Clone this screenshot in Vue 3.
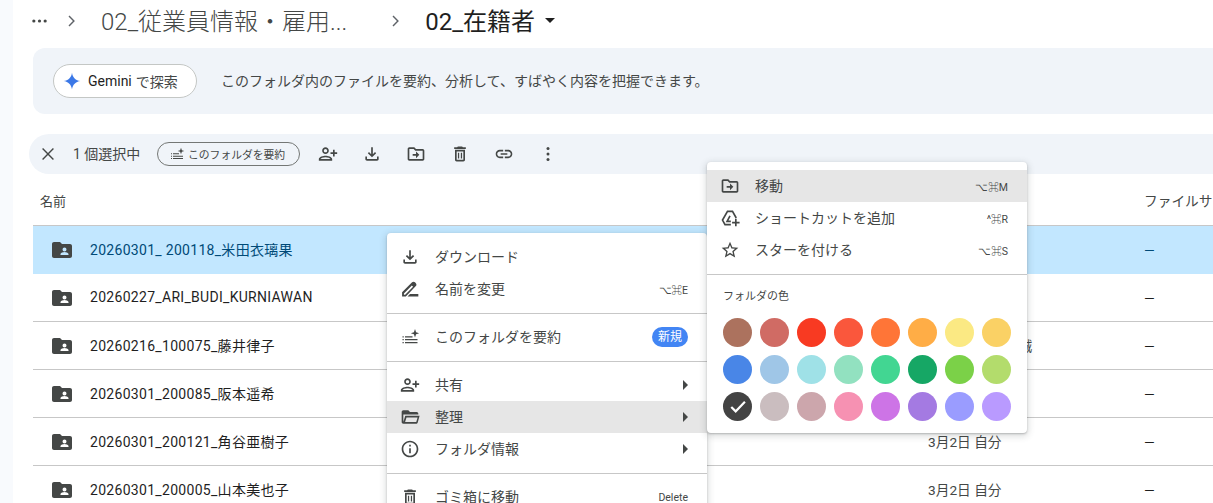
<script setup>
const rows = [
  { name: '20260301_ 200118_米田衣璃果', date: '', selected: true },
  { name: '20260227_ARI_BUDI_KURNIAWAN', date: '' },
  { name: '20260216_100075_藤井律子', date: '3月2日 人事部 誠' },
  { name: '20260301_200085_阪本遥希', date: '' },
  { name: '20260301_200121_角谷亜樹子', date: '3月2日 自分' },
  { name: '20260301_200005_山本美也子', date: '3月2日 自分' }
]

const swatches = [
  '#ac725e', '#d06b64', '#f83a22', '#fa573c', '#ff7537', '#ffad46', '#fbe983', '#fad165',
  '#4986e7', '#9fc6e7', '#9fe1e7', '#92e1c0', '#42d692', '#16a765', '#7bd148', '#b3dc6c',
  '#434343', '#cabdbf', '#cca6ac', '#f691b2', '#cd74e6', '#a47ae2', '#9a9cff', '#b99aff'
]

const icons = {
  person: 'M15 12c2.21 0 4-1.79 4-4s-1.79-4-4-4-4 1.79-4 4 1.79 4 4 4zm0-6c1.1 0 2 .9 2 2s-.9 2-2 2-2-.9-2-2 .9-2 2-2zm0 8c-2.67 0-8 1.34-8 4v2h16v-2c0-2.66-5.33-4-8-4zm-6 4c.22-.72 3.31-2 6-2 2.7 0 5.8 1.29 6 2H9zm-3-3v-3h3v-2H6V7H4v3H1v2h3v3h2z',
  download: 'M12 16l-5-5 1.4-1.45 2.6 2.6V4h2v8.15l2.6-2.6L17 11l-5 5zM6 20c-.55 0-1.02-.2-1.41-.59S4 18.55 4 18v-3h2v3h12v-3h2v3c0 .55-.2 1.02-.59 1.41S18.55 20 18 20H6z',
  move: 'M20 6h-8l-2-2H4c-1.1 0-2 .9-2 2v12c0 1.1.9 2 2 2h16c1.1 0 2-.9 2-2V8c0-1.1-.9-2-2-2zm0 12H4V6h5.17l2 2H20v10zm-8-4H8v-2h4V9l4 4-4 4v-3z',
  trash: 'M6 19c0 1.1.9 2 2 2h8c1.1 0 2-.9 2-2V7H6v12zM8 9h8v10H8V9zm7.5-5l-1-1h-5l-1 1H5v2h14V4h-3.5zM9.5 10.5H11v7H9.5zM13 10.5h1.5v7H13z',
  link: 'M3.9 12c0-1.71 1.39-3.1 3.1-3.1h4V7H7c-2.76 0-5 2.24-5 5s2.24 5 5 5h4v-1.9H7c-1.71 0-3.1-1.39-3.1-3.1zM8 13h8v-2H8v2zm9-6h-4v1.9h4c1.71 0 3.1 1.39 3.1 3.1s-1.39 3.1-3.1 3.1h-4V17h4c2.76 0 5-2.24 5-5s-2.24-5-5-5z',
  summary: 'M3 11h1.500v1.500H3zM3 14.500h1.500V16H3zM3 18h1.500v1.500H3zM6 11h9v1.500H6zM6 14.500h15V16H6zM6 18h15v1.500H6zM18 2.500l1.300 3.700 3.700 1.300-3.700 1.300L18 12.500l-1.300-3.700-3.700-1.300 3.700-1.300z',
  rename: 'M2.500 21v-5L14.500 4c1-1 2.500-1 3.500 0l1 1c1 1 1 2.500 0 3.500L7 21H2.500zm2.200-2.200h1.500L15.700 9.300l-1.500-1.500-9.500 9.500v1.500zM12 18h10v3H9z',
  folderOpen: 'M4 20c-1.100 0-2-.9-2-2V6c0-1.100.9-2 2-2h6l2 2h8c1.100 0 2 .9 2 2v1H4v9l2.300-7.500H23.500L21.300 18.500c-.3.9-1.100 1.500-2 1.500H4zm3.800-7.500l-1.700 5.500h13.400l1.600-5.500H7.800z',
  info: 'M11 7h2v2h-2zm0 4h2v6h-2zm1-9C6.480 2 2 6.480 2 12s4.480 10 10 10 10-4.480 10-10S17.520 2 12 2zm0 18c-4.410 0-8-3.590-8-8s3.590-8 8-8 8 3.590 8 8-3.590 8-8 8z',
  star: 'M22 9.240l-7.190-.62L12 2 9.190 8.630 2 9.240l5.460 4.730L5.820 21 12 17.270 18.180 21l-1.630-7.030L22 9.240zM12 15.400l-3.760 2.270 1-4.280-3.320-2.880 4.380-.38L12 6.100l1.710 4.040 4.380.38-3.320 2.880 1 4.280L12 15.400z',
  shortcutPlus: 'M18 13h2v3.500h3.500v2H20V22h-2v-3.500h-3.500v-2H18z',
  folderShared: 'M20 6h-8l-2-2H4c-1.100 0-2 .9-2 2v12c0 1.100.9 2 2 2h16c1.100 0 2-.9 2-2V8c0-1.100-.9-2-2-2zm-5.500 3.500a2 2 0 1 0 0 4 2 2 0 0 0 0-4zm-4 7.500h8v-1c0-1.300-2.700-2-4-2s-4 .7-4 2v1z'
}

const toolbarIcons = ['person', 'download', 'move', 'trash', 'link']
</script>

<template>
  <div class="page">
    <div class="breadcrumb">
      <svg class="dots" viewBox="0 0 18 4"><circle cx="3" cy="2" r="1.700" /><circle cx="9" cy="2" r="1.700" /><circle cx="15" cy="2" r="1.700" /></svg>
      <svg class="chevron" viewBox="0 0 24 24"><path d="M9 5.500l6.500 6.500L9 18.500l-1.200-1.200 5.300-5.300-5.300-5.300z" /></svg>
      <span class="crumb">02_従業員情報・雇用...</span>
      <svg class="chevron second" viewBox="0 0 24 24"><path d="M9 5.500l6.500 6.500L9 18.500l-1.200-1.200 5.300-5.300-5.300-5.300z" /></svg>
      <span class="crumb current">02_在籍者</span>
      <span class="caret"></span>
    </div>

    <div class="banner">
      <div class="gemini-chip">
        <svg class="sparkle" viewBox="0 0 24 24">
          <path d="M12 2c.7 5.500 4.500 9.300 10 10-5.500.7-9.300 4.500-10 10-.7-5.500-4.500-9.300-10-10 5.500-.7 9.300-4.500 10-10z" />
        </svg>
        <span class="gemini-name">Gemini</span><span class="gemini-search">で探索</span>
      </div>
      <span class="banner-text">このフォルダ内のファイルを要約、分析して、すばやく内容を把握できます。</span>
    </div>

    <div class="toolbar">
      <svg class="close" viewBox="0 0 24 24">
        <path d="M5.500 5.500l13 13M18.500 5.500l-13 13" />
      </svg>
      <span class="count">1 個選択中</span>
      <div class="summary-chip">
        <svg viewBox="0 0 24 24"><path :d="icons.summary" /></svg>
        <span class="chip-text">このフォルダを要約</span>
      </div>
      <div v-for="name in toolbarIcons" :key="name" class="tool">
        <svg viewBox="0 0 24 24">
          <path :d="icons[name]" :transform="name === 'person' ? 'matrix(-1 0 0 1 24 0)' : null" />
        </svg>
      </div>
      <div class="tool">
        <svg viewBox="0 0 24 24">
          <circle cx="12" cy="5.500" r="1.800" /><circle cx="12" cy="12" r="1.800" /><circle cx="12" cy="18.500" r="1.800" />
        </svg>
      </div>
    </div>

    <div class="table-head">
      <span class="col-name head-name">名前</span>
      <span class="col-date"></span>
      <span class="col-size">ファイルサイズ</span>
    </div>
    <div v-for="row in rows" :key="row.name" class="row" :class="{ selected: row.selected }">
      <div class="col-name">
        <svg class="folder" viewBox="0 0 24 24"><path :d="icons.folderShared" fill-rule="evenodd" /></svg>
        <span class="file-name">{{ row.name }}</span>
      </div>
      <span class="col-date">{{ row.date }}</span>
      <span class="col-size">—</span>
    </div>

    <div class="menu context-menu">
      <div class="item">
        <svg viewBox="0 0 24 24"><path :d="icons.download" /></svg>
        <span class="label">ダウンロード</span>
      </div>
      <div class="item">
        <svg viewBox="0 0 24 24"><path :d="icons.rename" fill-rule="evenodd" /></svg>
        <span class="label">名前を変更</span>
        <span class="hint">⌥⌘E</span>
      </div>
      <div class="divider"></div>
      <div class="item">
        <svg viewBox="0 0 24 24"><path :d="icons.summary" /></svg>
        <span class="label">このフォルダを要約</span>
        <span class="badge">新規</span>
      </div>
      <div class="divider"></div>
      <div class="item">
        <svg viewBox="0 0 24 24"><path :d="icons.person" transform="matrix(-1 0 0 1 24 0)" /></svg>
        <span class="label">共有</span>
        <span class="arrow"></span>
      </div>
      <div class="item active">
        <svg viewBox="0 0 24 24"><path :d="icons.folderOpen" fill-rule="evenodd" /></svg>
        <span class="label">整理</span>
        <span class="arrow"></span>
      </div>
      <div class="item">
        <svg viewBox="0 0 24 24"><path :d="icons.info" /></svg>
        <span class="label">フォルダ情報</span>
        <span class="arrow"></span>
      </div>
      <div class="divider"></div>
      <div class="item">
        <svg viewBox="0 0 24 24"><path :d="icons.trash" /></svg>
        <span class="label">ゴミ箱に移動</span>
        <span class="hint">Delete</span>
      </div>
    </div>

    <div class="menu sub-menu">
      <div class="item active">
        <svg viewBox="0 0 24 24"><path :d="icons.move" /></svg>
        <span class="label">移動</span>
        <span class="hint">⌥⌘M</span>
      </div>
      <div class="item">
        <svg viewBox="0 0 24 24">
          <path class="line" d="M19.500 12L15 4H9L3 14.500 6 20h7M12 9.500L8.500 16H13" />
          <path :d="icons.shortcutPlus" />
        </svg>
        <span class="label">ショートカットを追加</span>
        <span class="hint">^⌘R</span>
      </div>
      <div class="item">
        <svg viewBox="0 0 24 24"><path :d="icons.star" /></svg>
        <span class="label">スターを付ける</span>
        <span class="hint">⌥⌘S</span>
      </div>
      <div class="divider"></div>
      <div class="color-title">フォルダの色</div>
      <div class="swatches">
        <span
          v-for="(color, i) in swatches"
          :key="color"
          class="swatch"
          :style="{ background: color }"
        >
          <svg v-if="i === 16" viewBox="0 0 24 24"><path d="M9.500 18.500L3.800 12.800l1.700-1.700 4 4L18.700 5.500l1.700 1.700z" /></svg>
        </span>
      </div>
    </div>
  </div>
</template>

<style scoped>
.page {
  position: relative;
  height: 503px;
  overflow: hidden;
  box-sizing: border-box;
  background: #fff;
  border-left: 13px solid #f8fafd;
  font-family: Roboto, "Noto Sans CJK JP", sans-serif;
  color: #444746;
}

svg {
  fill: #444746;
  flex: none;
}

.line {
  fill: none;
  stroke: #444746;
  stroke-width: 2;
}

.breadcrumb {
  display: flex;
  align-items: center;
  height: 48px;
  padding: 0 0 7px 18px;
  box-sizing: border-box;
}

.dots {
  width: 17px;
  height: 4px;
}

.chevron {
  width: 20px;
  height: 20px;
  margin-left: 14px;
  fill: #5f6368;
}

.chevron.second {
  margin-left: 39px;
}

.crumb {
  margin-left: 19px;
  margin-bottom: 3px;
  font-size: 24px;
  font-weight: 300;
  color: #444746;
  white-space: nowrap;
}

.crumb.current {
  color: #1f1f1f;
  font-weight: 400;
  margin-left: 19px;
}

.caret {
  width: 0;
  height: 0;
  margin-left: 10px;
  border-left: 5px solid transparent;
  border-right: 5px solid transparent;
  border-top: 5px solid #1f1f1f;
}

.banner {
  display: flex;
  align-items: center;
  height: 66px;
  margin-left: 20px;
  padding-left: 20px;
  border-radius: 12px 0 0 12px;
  background: #f0f4f9;
}

.gemini-chip {
  display: flex;
  align-items: center;
  box-sizing: border-box;
  width: 144px;
  height: 34px;
  padding-left: 8px;
  background: #fff;
  border: 1px solid #c4c7c5;
  border-radius: 17px;
  font-size: 14px;
  color: #1f1f1f;
}

.sparkle {
  width: 20px;
  height: 20px;
  fill: #3b78e7;
  margin-right: 6px;
}

.gemini-name {
  margin-right: 4px;
  margin-bottom: 1px;
}

.gemini-search {
  color: #444746;
  margin-bottom: 1px;
}

.banner-text {
  margin-left: 24px;
  margin-bottom: 2px;
  font-size: 14px;
  white-space: nowrap;
}

.toolbar {
  display: flex;
  align-items: center;
  height: 40px;
  margin: 20px 0 0 16px;
  padding-left: 9px;
  border-radius: 20px 0 0 20px;
  background: #f0f4f9;
}

.close {
  width: 20px;
  height: 20px;
  fill: none;
  stroke: #444746;
  stroke-width: 1.700;
}

.count {
  margin-left: 15px;
  margin-bottom: 2px;
  font-size: 14px;
  width: 66px;
  white-space: nowrap;
}

.summary-chip {
  display: flex;
  align-items: center;
  box-sizing: border-box;
  width: 143px;
  height: 24px;
  margin: 0 6px 0 18px;
  padding-left: 11px;
  border: 1px solid #747775;
  border-radius: 12px;
  font-size: 10.800px;
  white-space: nowrap;
}

.summary-chip svg {
  width: 16px;
  height: 16px;
  margin-right: 3px;
}

.chip-text {
  margin-bottom: 1px;
}

.tool {
  display: flex;
  align-items: center;
  justify-content: center;
  width: 44px;
}

.tool svg {
  width: 20px;
  height: 20px;
}

.table-head,
.row {
  display: flex;
  align-items: center;
  margin-left: 20px;
  height: 48px;
  box-sizing: border-box;
  font-size: 13.700px;
  white-space: nowrap;
}

.table-head {
  height: 52px;
  border-bottom: 1px solid #c7c7c7;
}

.row {
  border-bottom: 1px solid #c7c7c7;
  color: #1f1f1f;
}

.row.selected {
  background: #c2e7ff;
  color: #004a77;
  border-bottom-color: #c2e7ff;
}

.col-name {
  display: flex;
  align-items: center;
  flex: none;
  width: 895px;
  box-sizing: border-box;
  padding-left: 17px;
}

.file-name {
  font-size: 14px;
  letter-spacing: 0.300px;
  margin-bottom: 2px;
}

.head-name {
  padding: 2px 0 0 7px;
  font-size: 13px;
  color: #444746;
}

.folder {
  width: 24px;
  height: 24px;
  margin-right: 16px;
}

.col-date {
  width: 216px;
  flex: none;
  color: #444746;
  margin-bottom: 2px;
}

.col-size {
  color: #444746;
}

.row .col-size {
  color: #1f1f1f;
}

.row.selected .col-size {
  color: #004a77;
}

.menu {
  position: absolute;
  width: 320px;
  box-sizing: border-box;
  padding: 8px 0;
  background: #fff;
  border-radius: 4px;
  box-shadow: 0 2px 6px 2px rgba(60, 64, 67, 0.15), 0 1px 2px rgba(60, 64, 67, 0.3);
  font-size: 14px;
}

.context-menu {
  left: 374px;
  top: 233px;
}

.sub-menu {
  left: 694px;
  top: 162px;
  height: 271px;
}

.item {
  display: flex;
  align-items: center;
  height: 32px;
  padding: 0 19px 0 13px;
  white-space: nowrap;
}

.item.active {
  background: #e6e6e6;
}

.item svg {
  width: 20px;
  height: 20px;
  margin-right: 15px;
}

.label {
  flex: 1;
  margin-bottom: 2px;
}

.hint {
  font-size: 10.500px;
  color: #444746;
}

.badge {
  padding: 0 6px;
  height: 20px;
  line-height: 20px;
  border-radius: 10px;
  background: #4285f4;
  color: #fff;
  font-size: 12px;
}

.arrow {
  width: 0;
  height: 0;
  border-top: 5px solid transparent;
  border-bottom: 5px solid transparent;
  border-left: 5px solid #444746;
}

.divider {
  height: 1px;
  margin: 8px 0 7px;
  background: #c7c7c7;
}

.color-title {
  margin: 14px 0 0 16px;
  font-size: 11px;
  line-height: 16px;
}

.swatches {
  display: grid;
  grid-template-columns: repeat(8, 29px);
  gap: 8px;
  margin: 13px 0 0 16px;
}

.swatch {
  display: flex;
  align-items: center;
  justify-content: center;
  width: 29px;
  height: 29px;
  border-radius: 50%;
}

.swatch svg {
  width: 22px;
  height: 22px;
  fill: #fff;
}
</style>

<style>
html,
body {
  margin: 0;
  overflow: hidden;
  background: #fff;
}
</style>
